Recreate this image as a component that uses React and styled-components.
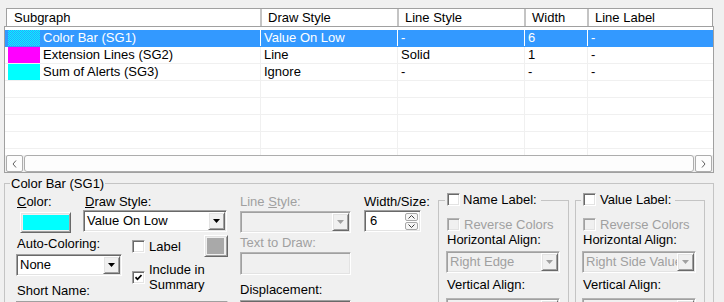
import React from "react";
import styled, { createGlobalStyle, css } from "styled-components";

const GlobalStyle = createGlobalStyle`
  html, body {
    margin: 0;
    padding: 0;
    background: #f0f0f0;
  }
  body {
    width: 724px;
    height: 302px;
    overflow: hidden;
    font-family: "Liberation Sans", Arial, sans-serif;
    font-size: 13px;
    color: #000;
  }
  * {
    box-sizing: border-box;
  }
`

const sunken = css`
    border: 1px solid;
    border-color: #a0a0a0 #fff #fff #a0a0a0;
    box-shadow: inset 1px 1px #696969, inset -1px -1px #e3e3e3;
`

const sunkenFaint = css`
    border: 1px solid;
    border-color: #b4b4b4 #fff #fff #b4b4b4;
    box-shadow: inset 1px 1px #a0a0a0, inset -1px -1px #e3e3e3;
`

const raised = css`
    border: 1px solid;
    border-color: #fff #696969 #696969 #fff;
    box-shadow: inset 1px 1px #e3e3e3, inset -1px -1px #a0a0a0;
`

const Page = styled.div`
    padding: 8px 0 0 4px;
`

/* ---------- list view ---------- */

const ListView = styled.div`
    width: 710px;
    height: 165px;
    display: flex;
    flex-direction: column;
`

const HeaderRow = styled.div`
    display: grid;
    grid-template-columns: 255px 137px 127px 63px 1fr;
    height: 18px;
    margin: 0 1px 0 2px;
    background: #fff;
    border: 1px solid #a0a0a0;
    border-bottom: none;
`

const HeaderCell = styled.div`
    line-height: 17px;
    padding-left: ${props => props.$indent}px;
    border-right: 2px solid #c4c4c4;
    white-space: nowrap;
    &:last-child {
        border-right: none;
    }
`

const ListBody = styled.div`
    flex: 1;
    min-height: 0;
    display: flex;
    flex-direction: column;
    background: #fff;
    border: 1px solid #a0a0a0;
`

const Rows = styled.div`
    flex: 1;
    overflow: hidden;
    padding-top: 3px;
`

const Row = styled.div`
    display: grid;
    grid-template-columns: 256px 137px 127px 63px 1fr;
    height: 17px;
    border-bottom: 1px solid ${props => props.$selected ? "#3399ff" : "#f0f0f0"};
    background: ${props => props.$selected ? "#3399ff" : "transparent"};
    color: ${props => props.$selected ? "#fff" : "#000"};
`

const Cell = styled.div`
    display: flex;
    align-items: center;
    gap: 3px;
    padding-left: 3px;
    line-height: 16px;
    white-space: nowrap;
    overflow: hidden;
    border-right: 1px solid ${props => props.$selected ? "#fff" : "#f0f0f0"};
    &:last-child {
        border-right: none;
    }
`

const Swatch = styled.span`
    flex: none;
    width: 32px;
    height: 16px;
    background: ${props => props.$color};
    ${props => props.$hatched && css`
        background: repeating-conic-gradient(#00ffff 0 25%, #3399ff 0 50%) 0 0 / 2px 2px;
    `}
`

const ScrollBar = styled.div`
    height: 17px;
    display: flex;
    gap: 1px;
    padding: 0 1px;
    background: #f0f0f0;
`

const ScrollButton = styled.div`
    width: 17px;
    display: flex;
    align-items: center;
    justify-content: center;
    border: 1px solid #adadad;
    border-radius: 2px;
    background: #fdfdfd;
`

const ScrollTrack = styled.div`
    flex: 1;
    border: 1px solid #adadad;
    border-radius: 3px;
    background: #fdfdfd;
`

/* ---------- settings group ---------- */

const Group = styled.fieldset`
    margin: 3px 0 0;
    padding: 3px 0 0 11px;
    width: 710px;
    height: 140px;
    min-width: 0;
    border: 1px solid #c4c4c4;
    border-bottom: none;
`

const GroupTitle = styled.legend`
    padding: 0 1px;
    margin-left: -6px;
    line-height: 15px;
`

const GroupBody = styled.div`
    display: flex;
    align-items: flex-start;
`

const LeftGrid = styled.div`
    display: grid;
    grid-template-columns: 67px 39px 10px 96px;
    grid-template-areas:
        "color draw draw draw"
        "auto auto . check"
        "short short . check"
        "name name name name";
    align-items: start;
`

const Area = styled.div`
    grid-area: ${props => props.$area};
    display: flex;
    flex-direction: column;
    align-items: flex-start;
`

const Column = styled.div`
    flex: none;
    width: ${props => props.$w}px;
    display: flex;
    flex-direction: column;
    align-items: flex-start;
    margin-left: ${props => props.$gap}px;
`

const Caption = styled.div`
    line-height: 15px;
    white-space: nowrap;
    color: ${props => props.$disabled ? "#a0a0a0" : "#000"};
    padding-left: ${props => props.$indent || 0}px;
    margin-top: ${props => props.$top || 0}px;
`

const ComboBox = styled.div`
    display: flex;
    width: ${props => props.$w}px;
    height: ${props => props.$h || 22}px;
    margin-top: ${props => props.$top || 0}px;
    margin-left: ${props => props.$left || 0}px;
    padding: 1px;
    ${props => props.$disabled ? sunkenFaint : sunken};
    background: ${props => props.$disabled ? "#f0f0f0" : "#fff"};
`

const ComboText = styled.div`
    flex: 1;
    overflow: hidden;
    white-space: nowrap;
    line-height: 18px;
    padding-left: 2px;
    color: ${props => props.$disabled ? "#a0a0a0" : "#000"};
`

const DropButton = styled.div`
    flex: none;
    width: 17px;
    display: flex;
    align-items: center;
    justify-content: center;
    background: #f0f0f0;
    ${raised};
`

const TextBox = styled.div`
    width: ${props => props.$w}px;
    height: ${props => props.$h || 23}px;
    margin-top: ${props => props.$top || 0}px;
    ${props => props.$disabled ? sunkenFaint : sunken};
    background: ${props => props.$disabled ? "#f0f0f0" : "#fff"};
`

const SpinBox = styled.div`
    display: flex;
    align-items: center;
    width: 57px;
    height: 22px;
    margin-top: 1px;
    padding: 1px 1px 1px 5px;
    ${sunken};
    background: #fff;
`

const SpinValue = styled.div`
    flex: 1;
    line-height: 18px;
`

const SpinButtons = styled.div`
    display: flex;
    flex-direction: column;
    gap: 1px;
    margin-right: 1px;
`

const SpinButton = styled.div`
    width: 13px;
    height: 8px;
    display: flex;
    align-items: center;
    justify-content: center;
    border: 1px solid #a8a8a8;
    border-radius: 2px;
    background: #f6f6f6;
`

const ColorButton = styled.div`
    width: 51px;
    height: 21px;
    margin: 3px 0 0 4px;
    padding: 2px 1px 2px 2px;
    background: #f0f0f0;
    ${raised};
`

const ColorFill = styled.div`
    width: 100%;
    height: 100%;
    background: ${props => props.$color};
`

const SquareButton = styled.div`
    width: 24px;
    height: 22px;
    margin-left: auto;
    padding: 2px 3px 2px 2px;
    background: #f0f0f0;
    ${raised};
`

const CheckRow = styled.label`
    display: flex;
    align-items: center;
    gap: 4px;
    width: 100%;
    margin-top: ${props => props.$top || 0}px;
    line-height: 15px;
    color: ${props => props.$disabled ? "#a0a0a0" : "#000"};
`

const CheckBox = styled.span`
    flex: none;
    width: 13px;
    height: 13px;
    display: inline-flex;
    align-items: center;
    justify-content: center;
    ${props => props.$disabled ? sunkenFaint : sunken};
    background: ${props => props.$disabled ? "#f0f0f0" : "#fff"};
`

const SubGroup = styled.fieldset`
    flex: none;
    margin: -2px 0 0 ${props => props.$gap}px;
    padding: 8px 0 0 ${props => props.$pad}px;
    width: ${props => props.$w}px;
    height: 120px;
    min-width: 0;
    border: 1px solid #c4c4c4;
    border-bottom: none;
`

const SubTitle = styled.legend`
    padding: 0 4px 0 2px;
    margin-left: -2px;
    line-height: 15px;
`

const TitleInner = styled.span`
    display: inline-flex;
    align-items: center;
    gap: ${props => props.$gap}px;
`

/* ---------- small drawings ---------- */

const Triangle = ({ color = "#000" }) => (
    <svg width="7" height="4" viewBox="0 0 7 4">
        <path d="M0 0h7L3.5 4z" fill={color} />
    </svg>
)

const Chevron = ({ dir }) => (
    <svg width="5" height="8" viewBox="0 0 5 8">
        <path d={dir === "left" ? "M4 0.5L1 4l3 3.5" : "M1 0.5L4 4 1 7.5"} fill="none" stroke="#606060" strokeWidth="1" />
    </svg>
)

const SpinArrow = ({ up }) => (
    <svg width="7" height="4" viewBox="0 0 7 4">
        <path d={up ? "M0.5 3.5L3.5 0.5l3 3" : "M0.5 0.5l3 3 3-3"} fill="none" stroke="#404040" strokeWidth="1" />
    </svg>
)

const Tick = () => (
    <svg width="7" height="7" viewBox="0 0 7 7">
        <path d="M0.5 3.2L2.5 5.3 6.5 1" fill="none" stroke="#000" strokeWidth="1.7" />
    </svg>
)

const Combo = ({ text, w, disabled, top, left }) => (
    <ComboBox $w={w} $disabled={disabled} $top={top} $left={left}>
        <ComboText $disabled={disabled}>{text}</ComboText>
        <DropButton>
            <Triangle color={disabled ? "#a0a0a0" : "#000"} />
        </DropButton>
    </ComboBox>
)

const Check = ({ checked, disabled }) => (
    <CheckBox $disabled={disabled}>{checked && <Tick />}</CheckBox>
)

const columns = [
    { title: "Subgraph", indent: 7 },
    { title: "Draw Style", indent: 6 },
    { title: "Line Style", indent: 6 },
    { title: "Width", indent: 6 },
    { title: "Line Label", indent: 6 },
]

const subgraphs = [
    { name: "Color Bar (SG1)", hatched: true, draw: "Value On Low", line: "-", width: "6", label: "-", selected: true },
    { name: "Extension Lines (SG2)", color: "#ff00ff", draw: "Line", line: "Solid", width: "1", label: "-" },
    { name: "Sum of Alerts (SG3)", color: "#00ffff", draw: "Ignore", line: "-", width: "-", label: "-" },
]

const LabelGroup = ({ title, gap, w, pad, align, titleGap }) => (
    <SubGroup $gap={gap} $w={w} $pad={pad}>
        <SubTitle>
            <TitleInner $gap={titleGap}>
                <Check />
                {title}
            </TitleInner>
        </SubTitle>
        <CheckRow $disabled>
            <Check disabled />
            Reverse Colors
        </CheckRow>
        <Caption>Horizontal Align:</Caption>
        <Combo text={align} w={114} disabled top={4} left={-1} />
        <Caption $top={4}>Vertical Align:</Caption>
        <Combo text="" w={114} disabled top={6} left={-1} />
    </SubGroup>
)

const App = () => {
    const emptyRows = Array.from({ length: 6 });

    return (
        <Page>
            <GlobalStyle />
            <ListView>
                <HeaderRow>
                    {columns.map(col => (
                        <HeaderCell key={col.title} $indent={col.indent}>{col.title}</HeaderCell>
                    ))}
                </HeaderRow>
                <ListBody>
                    <Rows>
                        {subgraphs.map(sg => (
                            <Row key={sg.name} $selected={sg.selected}>
                                <Cell $selected={sg.selected}>
                                    <Swatch $color={sg.color} $hatched={sg.hatched} />
                                    {sg.name}
                                </Cell>
                                <Cell $selected={sg.selected}>{sg.draw}</Cell>
                                <Cell $selected={sg.selected}>{sg.line}</Cell>
                                <Cell $selected={sg.selected}>{sg.width}</Cell>
                                <Cell $selected={sg.selected}>{sg.label}</Cell>
                            </Row>
                        ))}
                        {emptyRows.map((_, i) => (
                            <Row key={i}>
                                <Cell />
                                <Cell />
                                <Cell />
                                <Cell />
                                <Cell />
                            </Row>
                        ))}
                    </Rows>
                    <ScrollBar>
                        <ScrollButton><Chevron dir="left" /></ScrollButton>
                        <ScrollTrack />
                        <ScrollButton><Chevron dir="right" /></ScrollButton>
                    </ScrollBar>
                </ListBody>
            </ListView>

            <Group>
                <GroupTitle>Color Bar (SG1)</GroupTitle>
                <GroupBody>
                    <LeftGrid>
                        <Area $area="color">
                            <Caption $indent={1}><u>C</u>olor:</Caption>
                            <ColorButton><ColorFill $color="#00ffff" /></ColorButton>
                        </Area>
                        <Area $area="draw">
                            <Caption $indent={2}><u>D</u>raw Style:</Caption>
                            <Combo text="Value On Low" w={144} top={1} />
                        </Area>
                        <Area $area="auto">
                            <Caption $indent={1} $top={3}>Auto-Coloring:</Caption>
                            <Combo text="None" w={106} top={3} />
                        </Area>
                        <Area $area="check">
                            <CheckRow $top={2}>
                                <Check />
                                Label
                                <SquareButton><ColorFill $color="#a9a9a9" /></SquareButton>
                            </CheckRow>
                            <CheckRow $top={5}>
                                <Check checked />
                                <span>Include in Summary</span>
                            </CheckRow>
                        </Area>
                        <Area $area="short">
                            <Caption $indent={1} $top={7}>Short Name:</Caption>
                        </Area>
                        <Area $area="name">
                            <TextBox $w={212} $top={3} />
                        </Area>
                    </LeftGrid>

                    <Column $gap={12} $w={111}>
                        <Caption $disabled>Line <u>S</u>tyle:</Caption>
                        <Combo text="" w={111} disabled top={2} />
                        <Caption $disabled $top={2}>Text to Draw:</Caption>
                        <TextBox $w={111} $top={2} $disabled />
                        <Caption $top={7}>Displacement:</Caption>
                        <TextBox $w={111} $top={3} />
                    </Column>

                    <Column $gap={13} $w={57}>
                        <Caption>Width/Size:</Caption>
                        <SpinBox>
                            <SpinValue>6</SpinValue>
                            <SpinButtons>
                                <SpinButton><SpinArrow up /></SpinButton>
                                <SpinButton><SpinArrow /></SpinButton>
                            </SpinButtons>
                        </SpinBox>
                    </Column>

                    <LabelGroup title="Name Label:" gap={17} w={131} pad={8} titleGap={3} align="Right Edge" />
                    <LabelGroup title="Value Label:" gap={6} w={130} pad={7} titleGap={4} align="Right Side Value" />
                </GroupBody>
            </Group>
        </Page>
    )
}

export default App;
